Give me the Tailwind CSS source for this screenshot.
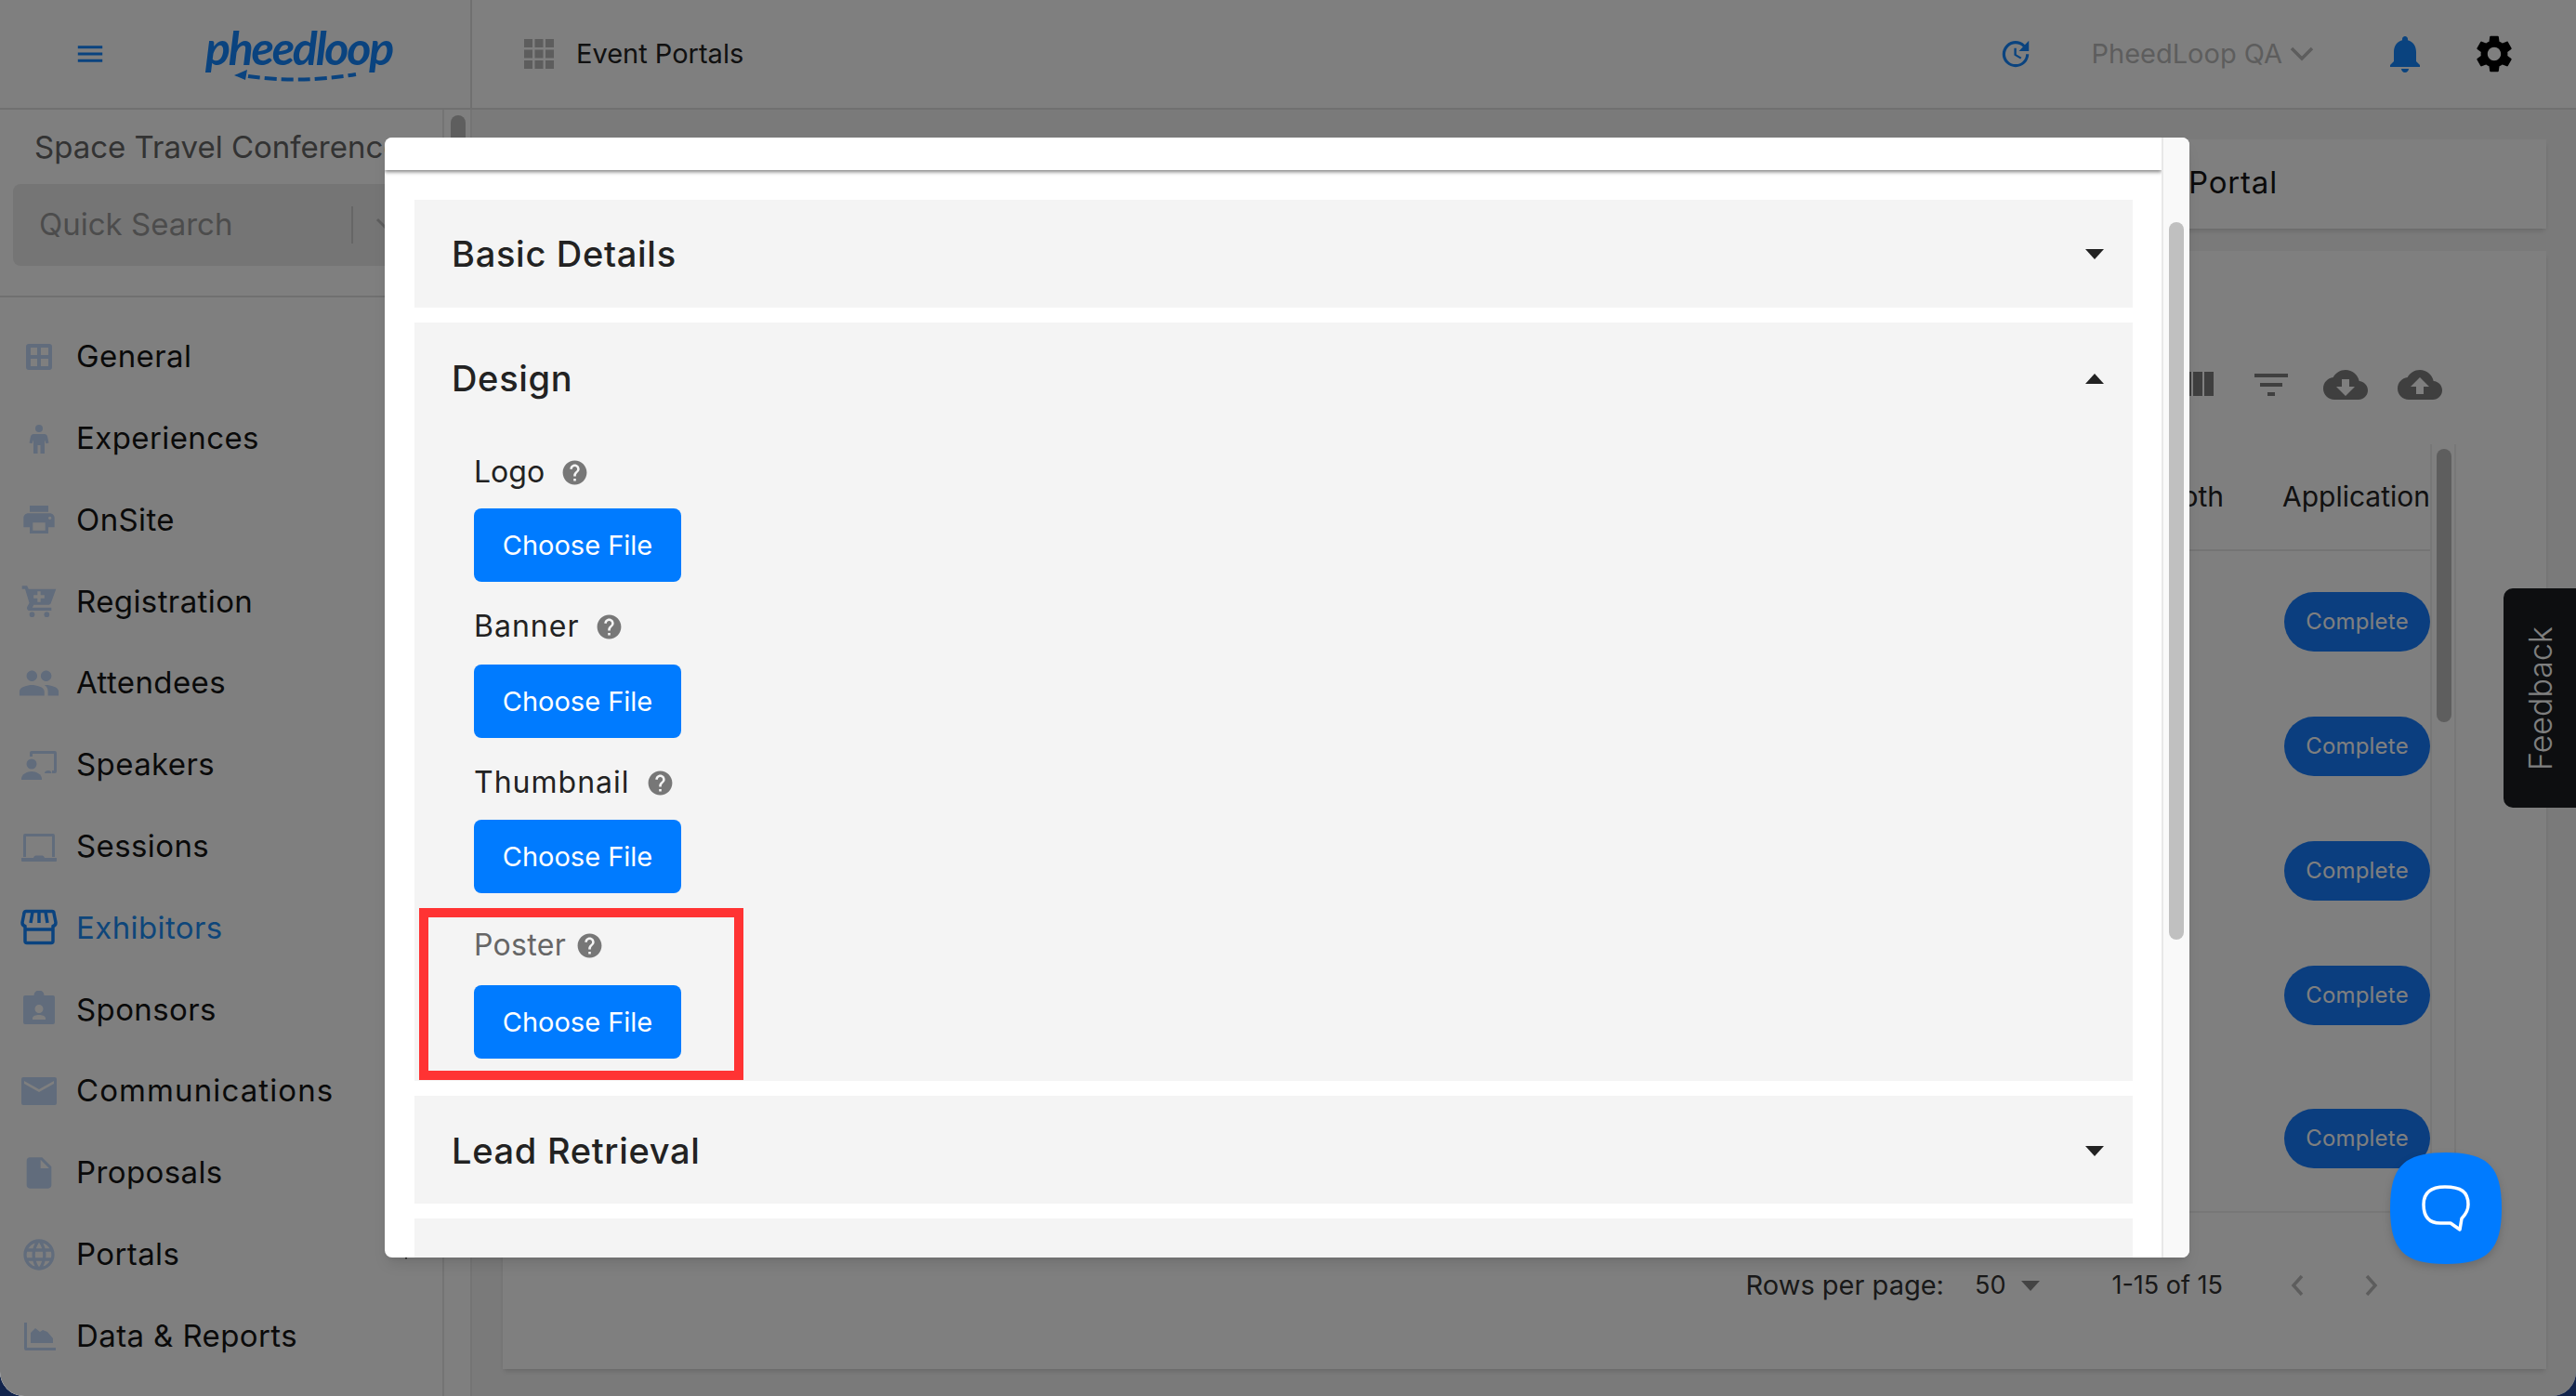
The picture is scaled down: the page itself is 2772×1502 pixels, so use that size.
<!DOCTYPE html>
<html lang="en">
<head>
<meta charset="UTF-8">
<title>PheedLoop</title>
<script src="https://cdn.jsdelivr.net/npm/@tailwindcss/browser@4"></script>
</head>
<body class="font-['Inter',sans-serif] bg-[#12244c] overflow-hidden">
<div class="relative w-[2772px] h-[1502px] overflow-hidden rounded-b-[26px] bg-[#f5f5f5] flex flex-col">

  <!-- Top bar -->
  <header class="h-[118px] shrink-0 flex items-center bg-white border-b-2 border-[#e0e0e0]">
    <div class="w-[508px] h-full shrink-0 flex items-center border-r-2 border-[#e0e0e0]">
      <svg class="w-[44px] h-[44px] ml-[75px] text-[#1487ff]" viewBox="0 0 24 24" fill="currentColor"><path d="M3 6h18v2H3zm0 5h18v2H3zm0 5h18v2H3z" transform="translate(2.4 2.4) scale(.8)"/></svg>
      <div class="relative ml-[102px] w-[200px] h-[70px]">
        <span class="block text-center text-[#1487ff] text-[50px] leading-[56px] font-bold italic tracking-[-2.2px] font-['Lato',sans-serif]">pheedloop</span>
        <svg class="absolute left-[30px] top-[52px] w-[140px] h-[16px]" viewBox="0 0 140 16" fill="none"><path d="M16 7 C50 12 90 12 132 5" stroke="#1487ff" stroke-width="4" stroke-dasharray="13 5"/><path d="M1 6 L15 0 L13 11 Z" fill="#1487ff"/></svg>
      </div>
    </div>
    <svg class="w-[36px] h-[36px] ml-[54px] text-[#bbb]" viewBox="0 0 36 36" fill="currentColor"><path d="M2 2h9v9H2zm11.500 0h9v9h-9zM25 2h9v9h-9zM2 13.500h9v9H2zm11.500 0h9v9h-9zM25 13.500h9v9h-9zM2 25h9v9H2zm11.500 0h9v9h-9zM25 25h9v9h-9z"/></svg>
    <span class="ml-[22px] text-[29px] text-[#222]">Event Portals</span>
    <div class="ml-auto flex items-center">
      <svg class="w-[38px] h-[38px] text-[#1487ff]" viewBox="0 0 24 24" fill="currentColor"><path d="M21 10.120h-6.780l2.740-2.820c-2.730-2.700-7.150-2.800-9.880-.1-2.730 2.710-2.730 7.080 0 9.790s7.150 2.710 9.880 0C18.320 15.650 19 14.080 19 12.100h2c0 1.980-.88 4.550-2.640 6.290-3.510 3.480-9.210 3.480-12.720 0-3.500-3.470-3.530-9.110-.02-12.580s9.140-3.470 12.650 0L21 3v7.120zM12.500 8v4.250l3.500 2.080-.72 1.210L11 13V8h1.500z"/></svg>
      <span class="ml-[62px] text-[29px] text-[#bbb]">PheedLoop QA</span>
      <svg class="w-[26px] h-[16px] ml-[8px] text-[#bbb]" viewBox="0 0 26 16" fill="none" stroke="currentColor" stroke-width="3.500"><path d="M2 2l11 11L24 2"/></svg>
      <svg class="w-[48px] h-[48px] ml-[74px] text-[#1487ff]" viewBox="0 0 24 24" fill="currentColor"><path d="M12 22c1.100 0 2-.9 2-2h-4c0 1.100.89 2 2 2zm6-6v-5c0-3.070-1.640-5.640-4.500-6.320V4c0-.83-.67-1.500-1.500-1.500s-1.500.67-1.500 1.500v.68C7.630 5.360 6 7.920 6 11v5l-2 2v1h16v-1l-2-2z"/></svg>
      <svg class="w-[48px] h-[48px] ml-[48px] mr-[64px] text-black" viewBox="0 0 24 24" fill="currentColor"><path d="M19.140 12.940c.04-.3.06-.61.06-.94 0-.32-.02-.64-.07-.94l2.030-1.580c.18-.14.23-.41.12-.61l-1.920-3.320c-.12-.22-.37-.29-.59-.22l-2.390.96c-.5-.38-1.030-.7-1.620-.94l-.36-2.540c-.04-.24-.24-.41-.48-.41h-3.840c-.24 0-.43.17-.47.41l-.36 2.540c-.59.24-1.130.57-1.620.94l-2.390-.96c-.22-.08-.47 0-.59.22L2.740 8.870c-.12.21-.08.47.12.61l2.030 1.580c-.05.3-.09.63-.09.94s.02.64.07.94l-2.030 1.580c-.18.14-.23.41-.12.61l1.920 3.320c.12.22.37.29.59.22l2.390-.96c.5.38 1.030.7 1.620.94l.36 2.540c.05.24.24.41.48.41h3.840c.24 0 .44-.17.47-.41l.36-2.540c.59-.24 1.130-.56 1.620-.94l2.390.96c.22.08.47 0 .59-.22l1.920-3.320c.12-.22.07-.47-.12-.61l-2.010-1.580zM12 15.600c-1.980 0-3.600-1.620-3.600-3.600s1.620-3.600 3.600-3.600 3.600 1.620 3.600 3.600-1.620 3.600-3.600 3.600z"/></svg>
    </div>
  </header>

  <div class="flex flex-1 min-h-0">
    <!-- Sidebar -->
    <aside class="w-[508px] shrink-0 bg-white flex">
      <div class="w-[478px] shrink-0 overflow-hidden border-r-2 border-[#e8e8e8]">
        <p class="mt-[20px] ml-[37px] h-[40px] leading-[40px] text-[33px] text-[#666] whitespace-nowrap">Space Travel Conference</p>
        <div class="mt-[20px] ml-[14px] w-[456px] h-[88px] rounded-[8px] bg-[#ebebeb] flex items-center">
          <span class="ml-[28px] text-[33px] text-[#999]">Quick Search</span>
          <span class="ml-auto w-[2px] h-[40px] bg-[#ccc]"></span>
          <svg class="ml-[24px] mr-[40px] w-[26px] h-[16px] text-[#bbb]" viewBox="0 0 26 16" fill="none" stroke="currentColor" stroke-width="3"><path d="M2 2l11 11L24 2"/></svg>
        </div>
        <div class="mt-[32px] border-t-2 border-[#e0e0e0]"></div>
        <nav class="mt-[20px] flex flex-col text-[#141414] text-[33px] tracking-[0.4px]">
          <a class="h-[87.8px] flex items-center gap-[20px]"><svg class="ml-[22px] w-[40px] h-[40px] text-[#c2d8f8]" viewBox="0 0 40 40" fill="currentColor"><path fill-rule="evenodd" d="M9 6h22a3 3 0 0 1 3 3v22a3 3 0 0 1-3 3H9a3 3 0 0 1-3-3V9a3 3 0 0 1 3-3zm2 4v8h7v-8zm11 0v8h8v-8zM11 22v8h7v-8zm11 0v8h8v-8z"/></svg>General</a>
          <a class="h-[87.8px] flex items-center gap-[20px]"><svg class="ml-[22px] w-[40px] h-[40px] text-[#c2d8f8]" viewBox="0 0 40 40" fill="currentColor"><circle cx="20" cy="9" r="4"/><path d="M14 15h12c1.500 0 2.500 1 3 2.500l1.500 7-3 .8-1.500-4V36h-4.500v-9h-3v9H14V21.300l-1.500 4-3-.8 1.500-7c.5-1.500 1.500-2.500 3-2.500z"/></svg>Experiences</a>
          <a class="h-[87.8px] flex items-center gap-[20px]"><svg class="ml-[22px] w-[40px] h-[40px] text-[#c2d8f8]" viewBox="0 0 24 24" fill="currentColor"><path d="M19 8H5c-1.660 0-3 1.340-3 3v6h4v4h12v-4h4v-6c0-1.660-1.340-3-3-3zm-3 11H8v-5h8v5zm3-7c-.55 0-1-.45-1-1s.45-1 1-1 1 .45 1 1-.45 1-1 1zm-1-9H6v4h12V3z"/></svg>OnSite</a>
          <a class="h-[87.8px] flex items-center gap-[20px]"><svg class="ml-[22px] w-[40px] h-[40px] text-[#c2d8f8]" viewBox="0 0 24 24" fill="currentColor"><path fill-rule="evenodd" d="M1 2h3.300l1 2H23l-3.300 9c-.3.8-1 1.300-1.800 1.300H8.600l-.9 1.700H20v2H6c-1.400 0-2.200-1.400-1.600-2.600l1.300-2.400L3 4H1zm12 3.500h-2v2.500H8.500v2H11v2.500h2V10h2.500V8H13z"/><circle cx="7.500" cy="20.500" r="1.700"/><circle cx="17" cy="20.500" r="1.700"/></svg>Registration</a>
          <a class="h-[87.8px] flex items-center gap-[20px]"><svg class="ml-[22px] w-[40px] h-[40px] text-[#c2d8f8] scale-[1.15]" viewBox="0 0 24 24" fill="currentColor"><path d="M16 11c1.660 0 2.990-1.340 2.990-3S17.660 5 16 5c-1.660 0-3 1.340-3 3s1.340 3 3 3zm-8 0c1.660 0 2.990-1.340 2.990-3S9.660 5 8 5C6.340 5 5 6.340 5 8s1.340 3 3 3zm0 2c-2.330 0-7 1.170-7 3.500V19h14v-2.500c0-2.330-4.670-3.500-7-3.500zm8 0c-.29 0-.62.02-.97.05 1.160.84 1.970 1.970 1.970 3.450V19h6v-2.500c0-2.330-4.670-3.500-7-3.500z"/></svg>Attendees</a>
          <a class="h-[87.8px] flex items-center gap-[20px]"><svg class="ml-[22px] w-[40px] h-[40px] text-[#c2d8f8]" viewBox="0 0 40 40" fill="currentColor"><path d="M12 5h25a2 2 0 0 1 2 2v20a2 2 0 0 1-2 2h-3v-3h2V8H13v3h-3V7a2 2 0 0 1 2-2z"/><circle cx="12" cy="19" r="5.500"/><path d="M1 35c0-5 6-8 11-8s11 3 11 8v1H1z"/><path d="M26 29c0-2 1.500-3 4-3s3 1 3.500 3H26z"/></svg>Speakers</a>
          <a class="h-[87.8px] flex items-center gap-[20px]"><svg class="ml-[22px] w-[40px] h-[40px] text-[#c2d8f8]" viewBox="0 0 40 40" fill="currentColor"><path d="M5 6h30a2 2 0 0 1 2 2v23h-3V9H6v22H3V8a2 2 0 0 1 2-2z"/><path d="M1 32h13c.5-2 2-2.500 3-2.500h6c1 0 2.500.5 3 2.500h13v3a1 1 0 0 1-1 1H2a1 1 0 0 1-1-1z"/></svg>Sessions</a>
          <a class="h-[87.8px] flex items-center gap-[20px] text-[#1c8cf5]"><svg class="ml-[22px] w-[40px] h-[40px] text-[#1487ff]" viewBox="0 0 40 40" fill="none" stroke="currentColor" stroke-width="3.500" stroke-linejoin="round"><path d="M6 2.500h28a2 2 0 0 1 2 2l2 10a4 4 0 0 1-3 4v16a2 2 0 0 1-2 2H7a2 2 0 0 1-2-2v-16a4 4 0 0 1-3-4l2-10a2 2 0 0 1 2-2z"/><path d="M6 22h28M13 3l-2 12M20 3v12M27 3l2 12"/></svg>Exhibitors</a>
          <a class="h-[87.8px] flex items-center gap-[20px]"><svg class="ml-[22px] w-[40px] h-[40px] text-[#c2d8f8]" viewBox="0 0 40 40" fill="currentColor"><path fill-rule="evenodd" d="M5 5h9.500a5.500 5.500 0 0 1 11 0H35a2 2 0 0 1 2 2v27a2 2 0 0 1-2 2H5a2 2 0 0 1-2-2V7a2 2 0 0 1 2-2zm15 10a4.500 4.500 0 1 0 0 9 4.500 4.500 0 0 0 0-9zm-7 16h14v-1.500c0-2.500-4-3.500-7-3.500s-7 1-7 3.500z"/></svg>Sponsors</a>
          <a class="h-[87.8px] flex items-center gap-[20px] tracking-[1.1px]"><svg class="ml-[22px] w-[40px] h-[40px] text-[#c2d8f8]" viewBox="0 0 40 40" fill="currentColor"><path fill-rule="evenodd" d="M3 5h34a2 2 0 0 1 2 2v26a2 2 0 0 1-2 2H3a2 2 0 0 1-2-2V7a2 2 0 0 1 2-2zm1 4v3l16 9 16-9V9l-16 9z"/></svg>Communications</a>
          <a class="h-[87.8px] flex items-center gap-[20px]"><svg class="ml-[22px] w-[40px] h-[40px] text-[#c2d8f8]" viewBox="0 0 24 24" fill="currentColor"><path d="M6 2c-1.100 0-1.990.9-1.990 2L4 20c0 1.100.89 2 1.990 2H18c1.100 0 2-.9 2-2V8l-6-6H6zm7 7V3.500L18.500 9H13z"/></svg>Proposals</a>
          <a class="h-[87.8px] flex items-center gap-[20px]"><svg class="ml-[22px] w-[40px] h-[40px] text-[#c2d8f8]" viewBox="0 0 24 24" fill="currentColor"><path d="M11.990 2C6.470 2 2 6.480 2 12s4.470 10 9.990 10C17.520 22 22 17.520 22 12S17.520 2 11.990 2zm6.930 6h-2.950c-.32-1.250-.78-2.450-1.380-3.560 1.840.63 3.370 1.910 4.330 3.560zM12 4.040c.83 1.200 1.480 2.530 1.910 3.960h-3.820c.43-1.430 1.080-2.760 1.910-3.960zM4.260 14C4.100 13.360 4 12.690 4 12s.1-1.360.26-2h3.380c-.08.66-.14 1.320-.14 2 0 .68.06 1.340.14 2H4.260zm.82 2h2.950c.32 1.250.78 2.450 1.380 3.560-1.840-.63-3.370-1.900-4.330-3.560zm2.950-8H5.080c.96-1.660 2.490-2.930 4.330-3.560C8.810 5.550 8.350 6.750 8.030 8zM12 19.960c-.83-1.200-1.480-2.530-1.910-3.960h3.820c-.43 1.430-1.080 2.760-1.910 3.960zM14.340 14H9.660c-.09-.66-.16-1.320-.16-2 0-.68.07-1.350.16-2h4.680c.09.65.16 1.320.16 2 0 .68-.07 1.340-.16 2zm.25 5.560c.6-1.110 1.060-2.310 1.380-3.560h2.950c-.96 1.650-2.490 2.930-4.330 3.560zM16.360 14c.08-.66.14-1.320.14-2 0-.68-.06-1.340-.14-2h3.380c.16.64.26 1.310.26 2s-.1 1.360-.26 2h-3.380z"/></svg>Portals<svg class="ml-auto mr-[33px] w-[12px] h-[10px] text-[#222]" viewBox="0 0 12 10" fill="currentColor"><path d="M0 0h12L6 10z"/></svg></a>
          <a class="h-[87.8px] flex items-center gap-[20px]"><svg class="ml-[22px] w-[40px] h-[40px] text-[#c2d8f8]" viewBox="0 0 40 40" fill="currentColor"><path d="M4 6h3v27h31v3H6a2 2 0 0 1-2-2z"/><path d="M11 28V17l5-5 5 4 3-2 5 2 6 7v5z"/></svg>Data &amp; Reports</a>
        </nav>
      </div>
      <div class="relative w-[30px] shrink-0 border-r-2 border-[#e8e8e8]">
        <span class="absolute left-[7px] top-[6px] w-[16px] h-[80px] rounded-full bg-[#bdbdbd]"></span>
      </div>
    </aside>

    <!-- Main column -->
    <main class="flex-1 min-w-0 pl-[33px] pr-[32px] pt-[32px] pb-[29px] flex flex-col gap-[24px]">
      <section class="h-[96px] shrink-0 bg-white shadow-md flex items-center justify-end pb-[2px] pr-[289px]">
        <span class="text-[33px] tracking-[0.8px] text-[#141414]">Exhibitor Portal</span>
      </section>
      <section class="flex-1 min-h-0 bg-white shadow-md flex flex-col">
        <div class="h-[208px] shrink-0 pt-[120px] pr-[112px] flex justify-end items-start gap-[32px] text-[#7e7e7e]">
          <svg class="w-[48px] h-[48px]" viewBox="0 0 24 24" fill="currentColor"><path d="M10 18h5V5h-5v13zm-6 0h5V5H4v13zM16 5v13h5V5h-5z"/></svg>
          <svg class="w-[48px] h-[48px]" viewBox="0 0 24 24" fill="currentColor"><path d="M10 18h4v-2h-4v2zM3 6v2h18V6H3zm3 7h12v-2H6v2z"/></svg>
          <svg class="w-[48px] h-[48px]" viewBox="0 0 24 24" fill="currentColor"><path d="M19.350 10.040C18.670 6.590 15.640 4 12 4 9.110 4 6.600 5.640 5.350 8.040 2.340 8.360 0 10.910 0 14c0 3.310 2.690 6 6 6h13c2.760 0 5-2.240 5-5 0-2.640-2.050-4.780-4.650-4.960zM17 13l-5 5-5-5h3V9h4v4h3z"/></svg>
          <svg class="w-[48px] h-[48px]" viewBox="0 0 24 24" fill="currentColor"><path d="M19.350 10.040C18.670 6.590 15.640 4 12 4 9.110 4 6.600 5.640 5.350 8.040 2.340 8.360 0 10.910 0 14c0 3.310 2.690 6 6 6h13c2.760 0 5-2.240 5-5 0-2.640-2.050-4.780-4.650-4.960zM14 13v4h-4v-4H7l5-5 5 5h-3z"/></svg>
        </div>
        <div class="relative flex-1 min-h-0 flex">
          <div class="flex-1 min-w-0 h-[825px] overflow-hidden">
            <div class="h-[115px] flex items-center justify-end border-b-2 border-[#e8e8e8] text-[30px] text-[#222]"><span class="mr-[63px]">Booth</span><span>Application</span></div>
            <div class="flex flex-col items-end pt-[44px] gap-[70px]">
              <span class="w-[157px] h-[64px] rounded-full bg-[#167cff] text-white text-[24px] tracking-[0.2px] flex items-center justify-center">Complete</span>
              <span class="w-[157px] h-[64px] rounded-full bg-[#167cff] text-white text-[24px] tracking-[0.2px] flex items-center justify-center">Complete</span>
              <span class="w-[157px] h-[64px] rounded-full bg-[#167cff] text-white text-[24px] tracking-[0.2px] flex items-center justify-center">Complete</span>
              <span class="w-[157px] h-[64px] rounded-full bg-[#167cff] text-white text-[24px] tracking-[0.2px] flex items-center justify-center">Complete</span>
              <span class="w-[157px] h-[64px] mt-[20px] rounded-full bg-[#167cff] text-white text-[24px] tracking-[0.2px] flex items-center justify-center">Complete</span>
            </div>
          </div>
          <div class="relative w-[28px] h-[825px] border-x-2 border-[#eeeeee] mr-[97px] shrink-0">
            <span class="absolute left-[5px] top-[5px] w-[16px] h-[294px] rounded-full bg-[#bdbdbd]"></span>
          </div>
          <div class="absolute left-0 right-[125px] top-[825px] h-[30px] border-t-2 border-[#eeeeee]"></div>
          <div class="absolute right-0 left-0 top-[855px] h-[100px] flex items-center text-[#333]">
            <span class="ml-auto text-[29px]">Rows per page:</span>
            <span class="ml-[33px] text-[27px]">50</span>
            <svg class="ml-[17px] w-[20px] h-[11px] text-[#888]" viewBox="0 0 20 11" fill="currentColor"><path d="M0 0h20L10 11z"/></svg>
            <span class="ml-[77px] text-[27px]">1-15 of 15</span>
            <svg class="ml-[72px] w-[16px] h-[24px] text-[#bbb]" viewBox="0 0 16 24" fill="none" stroke="currentColor" stroke-width="3.500"><path d="M13 2 4 12l9 10"/></svg>
            <svg class="ml-[64px] mr-[180px] w-[16px] h-[24px] text-[#bbb]" viewBox="0 0 16 24" fill="none" stroke="currentColor" stroke-width="3.500"><path d="M3 2l9 10-9 10"/></svg>
          </div>
        </div>
      </section>
    </main>
  </div>

  <!-- Feedback tab -->
  <div class="absolute right-0 top-[633px] w-[78px] h-[236px] rounded-l-[10px] bg-[#1a1c20] flex items-center justify-center">
    <span class="-rotate-90 whitespace-nowrap text-[34px] font-light text-white">Feedback</span>
  </div>

  <!-- Backdrop -->
  <div class="absolute inset-0 bg-black/50"></div>

  <!-- Modal -->
  <div class="absolute left-[414px] top-[148px] w-[1942px] h-[1205px] rounded-[8px] bg-white overflow-hidden flex shadow-lg">
    <div class="flex-1 min-w-0 flex flex-col">
      <div class="h-[35px] shrink-0 bg-white shadow-[0_2px_4px_rgba(0,0,0,0.5)] relative"></div>
      <div class="flex-1 min-h-0 overflow-hidden pt-[32px] pl-[32px] pr-[31px] flex flex-col gap-[16px]">
        <div class="h-[116px] shrink-0 bg-[#f4f4f4] flex items-center justify-between pt-[1px] pl-[40px] pr-[31px] text-[38px] font-[450] tracking-[0.7px] text-[#222]">Basic Details<svg class="w-[20px] h-[11px] text-[#222]" viewBox="0 0 20 11" fill="currentColor"><path d="M0 0h20L10 11z"/></svg></div>
        <div class="h-[816px] shrink-0 bg-[#f4f4f4] relative">
          <div class="h-[120px] flex items-center justify-between pl-[40px] pr-[31px] text-[38px] font-[450] tracking-[0.7px] text-[#222]">Design<svg class="w-[20px] h-[11px] text-[#222]" viewBox="0 0 20 11" fill="currentColor"><path d="M0 11h20L10 0z"/></svg></div>
          <div class="pl-[64px] flex flex-col items-start">
            <div class="mt-[21px] h-[40px] flex items-center gap-[17px] text-[32px] text-[#222]">Logo<svg class="w-[31px] h-[31px] text-[#777]" viewBox="0 0 24 24" fill="currentColor"><path d="M12 2C6.480 2 2 6.480 2 12s4.480 10 10 10 10-4.480 10-10S17.520 2 12 2zm1 17h-2v-2h2v2zm2.070-7.750l-.9.92C13.450 12.900 13 13.500 13 15h-2v-.5c0-1.100.45-2.100 1.170-2.830l1.240-1.260c.37-.36.59-.86.59-1.410 0-1.100-.9-2-2-2s-2 .9-2 2H8c0-2.210 1.790-4 4-4s4 1.790 4 4c0 .88-.36 1.680-.93 2.250z"/></svg></div>
            <button class="mt-[19px] w-[223px] h-[79px] rounded-[8px] bg-[#007bff] text-white text-[29px]">Choose File</button>
            <div class="mt-[28px] h-[40px] flex items-center gap-[17px] text-[32px] tracking-[1px] text-[#222]">Banner<svg class="w-[31px] h-[31px] text-[#777]" viewBox="0 0 24 24" fill="currentColor"><path d="M12 2C6.480 2 2 6.480 2 12s4.480 10 10 10 10-4.480 10-10S17.520 2 12 2zm1 17h-2v-2h2v2zm2.070-7.750l-.9.92C13.450 12.900 13 13.500 13 15h-2v-.5c0-1.100.45-2.100 1.170-2.830l1.240-1.260c.37-.36.59-.86.59-1.410 0-1.100-.9-2-2-2s-2 .9-2 2H8c0-2.210 1.790-4 4-4s4 1.790 4 4c0 .88-.36 1.680-.93 2.250z"/></svg></div>
            <button class="mt-[21px] w-[223px] h-[79px] rounded-[8px] bg-[#007bff] text-white text-[29px]">Choose File</button>
            <div class="mt-[28px] h-[40px] flex items-center gap-[17px] text-[32px] tracking-[1px] text-[#222]">Thumbnail<svg class="w-[31px] h-[31px] text-[#777]" viewBox="0 0 24 24" fill="currentColor"><path d="M12 2C6.480 2 2 6.480 2 12s4.480 10 10 10 10-4.480 10-10S17.520 2 12 2zm1 17h-2v-2h2v2zm2.070-7.750l-.9.92C13.450 12.900 13 13.500 13 15h-2v-.5c0-1.100.45-2.100 1.170-2.830l1.240-1.260c.37-.36.59-.86.59-1.410 0-1.100-.9-2-2-2s-2 .9-2 2H8c0-2.210 1.790-4 4-4s4 1.790 4 4c0 .88-.36 1.680-.93 2.250z"/></svg></div>
            <button class="mt-[20px] w-[223px] h-[79px] rounded-[8px] bg-[#007bff] text-white text-[29px]">Choose File</button>
            <div class="mt-[36px] h-[40px] flex items-center gap-[10px] text-[32px] tracking-[0.3px] text-[#666]">Poster<svg class="w-[31px] h-[31px] text-[#777]" viewBox="0 0 24 24" fill="currentColor"><path d="M12 2C6.480 2 2 6.480 2 12s4.480 10 10 10 10-4.480 10-10S17.520 2 12 2zm1 17h-2v-2h2v2zm2.070-7.750l-.9.92C13.450 12.900 13 13.500 13 15h-2v-.5c0-1.100.45-2.100 1.170-2.830l1.240-1.260c.37-.36.59-.86.59-1.410 0-1.100-.9-2-2-2s-2 .9-2 2H8c0-2.210 1.790-4 4-4s4 1.790 4 4c0 .88-.36 1.680-.93 2.250z"/></svg></div>
            <button class="mt-[23px] w-[223px] h-[79px] rounded-[8px] bg-[#007bff] text-white text-[29px]">Choose File</button>
          </div>
          <!-- annotation box -->
          <div class="absolute left-[5px] top-[630px] w-[349px] h-[185px] border-[10px] border-[#ff3333]"></div>
        </div>
        <div class="h-[116px] shrink-0 bg-[#f4f4f4] flex items-center justify-between pt-[3px] pl-[40px] pr-[31px] text-[38px] font-[450] tracking-[0.7px] text-[#222]">Lead Retrieval<svg class="w-[20px] h-[11px] text-[#222]" viewBox="0 0 20 11" fill="currentColor"><path d="M0 0h20L10 11z"/></svg></div>
        <div class="h-[115px] shrink-0 bg-[#f4f4f4]"></div>
      </div>
    </div>
    <div class="relative w-[30px] shrink-0 bg-[#f9f9f9] border-l-2 border-[#e8e8e8]">
      <span class="absolute left-[6px] top-[91px] w-[16px] h-[772px] rounded-full bg-[#c0c0c0]"></span>
    </div>
  </div>

  <!-- Chat launcher -->
  <div class="absolute left-[2572px] top-[1240px] w-[120px] h-[120px] flex items-center justify-center drop-shadow-lg">
    <svg class="absolute inset-0 w-[120px] h-[120px]" viewBox="0 0 120 120" fill="#007bff"><path d="M60 0C105 0 120 15 120 60C120 105 105 120 60 120C15 120 0 105 0 60C0 15 15 0 60 0Z"/></svg>
    <svg class="relative w-[52px] h-[52px] mt-[2px]" viewBox="0 0 52 52" fill="none" stroke="white" stroke-width="3.500" stroke-linejoin="round"><path d="M25 2C42 2 50 7 50 21C50 28 47 32 43 36L41 48L31 41L20 41C8 41 2 34 2 21C2 8 10 2 25 2Z"/></svg>
  </div>
</div>
</body>
</html>
